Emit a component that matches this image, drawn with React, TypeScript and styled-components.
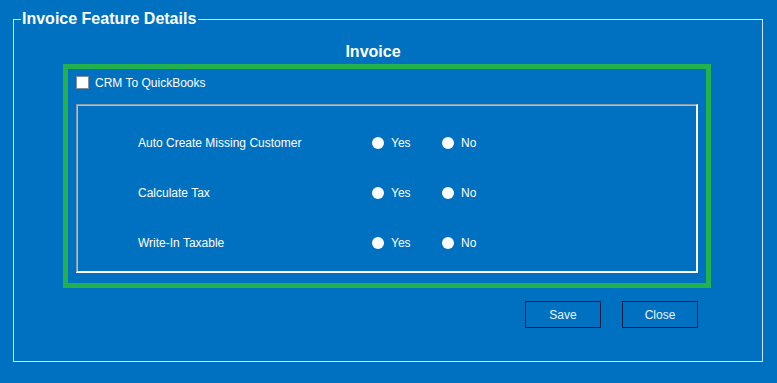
import React from 'react'
import styled, { createGlobalStyle } from 'styled-components'

const GlobalStyle = createGlobalStyle`
  html, body {
    margin: 0;
    padding: 0;
    background: #0070c0;
    font-family: "Liberation Sans", Arial, sans-serif;
    color: #ffffff;
  }
`

const Page = styled.div`
  width: 777px;
  height: 383px;
  padding: 9px 0 0 13px;
  box-sizing: border-box;
  overflow: hidden;
`

const Frame = styled.fieldset`
  width: 750px;
  margin: 0;
  padding: 13px 0 33px 49px;
  box-sizing: border-box;
  border: 1px solid #cfe6f7;
  min-inline-size: 0;
`

const Legend = styled.legend`
  padding: 0 2px 0 1px;
  margin-left: -42px;
  font-size: 16px;
  line-height: 20px;
  font-weight: bold;
  color: #ffffff;
`

const Title = styled.div`
  width: 620px;
  text-align: center;
  font-size: 16px;
  line-height: 20px;
  font-weight: bold;
`

const Highlight = styled.div`
  width: 648px;
  height: 224px;
  margin-top: 2px;
  border: 5px solid #22b14c;
  box-sizing: border-box;
  padding: 7px 0 0 8px;
`

const CheckRow = styled.label`
  display: flex;
  align-items: center;
  gap: 6px;
  height: 15px;
  font-size: 12px;
  line-height: 15px;
`

const CheckBox = styled.span`
  width: 13px;
  height: 13px;
  margin-top: -3px;
  box-sizing: border-box;
  background: #ffffff;
  border: 1px solid #7f8f9f;
`

const Panel = styled.div`
  width: 622px;
  height: 169px;
  margin-top: 13px;
  box-sizing: border-box;
  border-style: solid;
  border-width: 1px 2px 2px 1px;
  border-color: #8e9aa6 #ffffff #ffffff #8e9aa6;
  box-shadow: inset 1px 1px 0 #b5bec8;
  padding: 12px 0 0 61px;
`

const Row = styled.div`
  display: flex;
  align-items: center;
  height: 50px;
  font-size: 12px;
`

const Label = styled.span`
  width: 234px;
  line-height: 16px;
  padding-top: 1px;
`

const Choice = styled.span<{ $w: number }>`
  display: flex;
  align-items: center;
  gap: 7px;
  width: ${p => p.$w}px;
  padding-top: 2px;
  line-height: 16px;
`

const Radio = styled.span`
  width: 12px;
  height: 12px;
  border-radius: 50%;
  background: #ffffff;
`

const ButtonRow = styled.div`
  display: flex;
  justify-content: flex-end;
  gap: 21px;
  width: 648px;
  padding-right: 13px;
  margin-top: 13px;
  box-sizing: border-box;
`

const Button = styled.button`
  width: 76px;
  height: 27px;
  background: #0070c0;
  border: 1px solid #0c1c45;
  color: #eaf4ff;
  font-family: "Liberation Sans", Arial, sans-serif;
  font-size: 12px;
  padding: 0;
`

const rows = ['Auto Create Missing Customer', 'Calculate Tax', 'Write-In Taxable']

const App = () => {
  return (
    <>
      <GlobalStyle />
      <Page>
        <Frame>
          <Legend>Invoice Feature Details</Legend>
          <Title>Invoice</Title>
          <Highlight>
            <CheckRow>
              <CheckBox />
              CRM To QuickBooks
            </CheckRow>
            <Panel>
              {rows.map(name => (
                <Row key={name}>
                  <Label>{name}</Label>
                  <Choice $w={70}>
                    <Radio />
                    Yes
                  </Choice>
                  <Choice $w={60}>
                    <Radio />
                    No
                  </Choice>
                </Row>
              ))}
            </Panel>
          </Highlight>
          <ButtonRow>
            <Button>Save</Button>
            <Button>Close</Button>
          </ButtonRow>
        </Frame>
      </Page>
    </>
  )
}

export default App
